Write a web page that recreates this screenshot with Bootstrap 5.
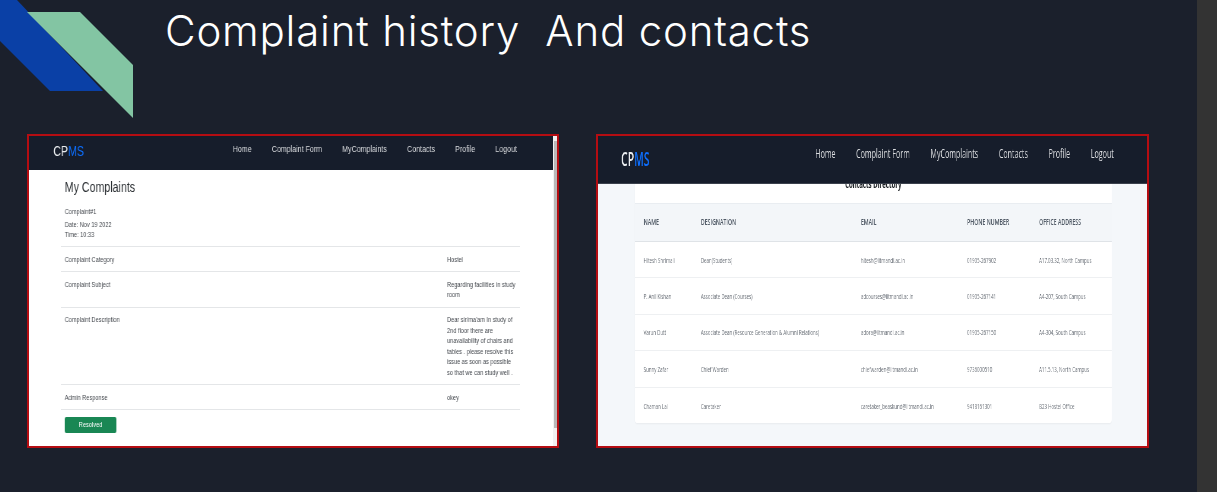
<!DOCTYPE html>
<html lang="en">
<head>
  <meta charset="UTF-8">
  <meta name="viewport" content="width=device-width, initial-scale=1">
  <title>Complaint history And contacts</title>
  <link href="https://cdn.jsdelivr.net/npm/bootstrap@5.3.0/dist/css/bootstrap.min.css" rel="stylesheet">
  <style>
    html, body { height: 492px; overflow: hidden; }
    body { background: #1b202c; }
    .slide { width: 1197px; height: 492px; flex: none; }
    .side-strip { width: 20px; height: 492px; background: #333; }
    .deco { width: 133px; height: 118px; flex: none; }
    .slide-title { font-family: Inter, sans-serif; font-weight: 300; font-size: 42px; line-height: 1; color: #fff; margin: 10px 0 0 32px; white-space: pre; letter-spacing: .8px; }
    .shots { gap: 37px; margin: 16px 0 0 27px; }
    .shot { height: 314px; border: 2px solid #b50d12; overflow: hidden; background: #fff; flex: none; }
    .shot-left { width: 532px; font-family: "Liberation Sans", sans-serif; }
    .shot-right { width: 553px; background: #f4f7fa; font-family: "Open Sans", sans-serif; }
    /* the two pictures are squeezed screenshots: lay out at natural width, then squeeze */
    .squeeze-frame { width: 524px; height: 310px; flex: none; overflow: hidden; }
    .squeeze-left { width: 690px; height: 310px; transform: scaleX(.76); transform-origin: 0 0; will-change: transform; }
    .squeeze-right { width: 998px; height: 310px; transform: scaleX(.55); transform-origin: 0 0; will-change: transform; }
    .shot-nav { background: #161d2b; position: relative; z-index: 2; align-items: flex-start; flex-wrap: nowrap; }
    .shot-left .shot-nav { height: 34px; padding: 7px 48px 0 32px; }
    .shot-right .shot-nav { height: 48px; padding: 8px 60px 0 42px; border-bottom: 1px solid #3a404c; }
    .logo { color: #e9ecef; padding: 0; margin: 0; }
    .logo span { color: #0d6efd; }
    .shot-left .logo { font-size: 14px; line-height: 16px; }
    .shot-right .logo { font-size: 19px; line-height: 27px; margin-top: 2px; font-weight: 600; }
    .shot-nav .nav { flex-wrap: nowrap; white-space: nowrap; }
    .shot-nav .nav-link { color: #dcdee1; padding: 0; }
    .shot-left .nav { gap: 26.5px; line-height: 12px; }
    .shot-left .nav-link { font-size: 9.3px; }
    .shot-right .nav { gap: 37.5px; line-height: 18px; }
    .shot-right .nav-link { font-size: 13px; }
    .fake-scroll { width: 5px; flex: none; background: #f1f1f1; padding: 5px 1px; }
    .fake-scroll div { background: #b9b9b9; height: 287px; }
    .complaint-box { padding: 0 44px 0 42px; color: #44484e; font-size: 7.4px; line-height: 10.5px; }
    .complaint-box h1 { font-size: 14px; line-height: 16px; margin: 9px 0 11.5px 5px; font-weight: 400; color: #2b2f33; }
    .complaint-meta { padding-left: 5px; height: 39.5px; }
    .complaint-meta p { margin: 0; }
    .complaint-meta p:first-child { margin-bottom: 2.5px; }
    .complaint-table { margin: 0; font-size: 7.4px; table-layout: fixed; width: 604px; }
    .complaint-table td { padding: 7.5px 5px 6px; border-top: 1px solid #e4e6e8; border-bottom: 0; color: #44484e; vertical-align: top; line-height: 10.5px; }
    .complaint-table tr:last-child td { border-bottom: 1px solid #e4e6e8; }
    .complaint-table td:last-child { width: 101px; }
    .resolve-btn { width: 68px; height: 16px; padding: 0; margin: 7px 0 0 5px; font-size: 7.4px; line-height: 16px; border-radius: 2px; border: 0; display: block; }
    .contacts-card { width: 867px; margin: -14px 0 0 67px; background: #fff; border-radius: 4px; box-shadow: 0 1px 2px rgba(0,0,0,.05); overflow: hidden; }
    .contacts-title { height: 33px; padding-top: 8px; text-align: center; font-size: 11px; font-weight: 700; line-height: 11px; color: #212529; margin: 0; }
    .contacts-table { margin: 0; table-layout: fixed; width: 867px; font-size: 8px; }
    .contacts-table th { height: 38px; padding: 0 0 0 16px; background: #f3f6f9; border-top: 1px solid #e9edf1; border-bottom: 1px solid #dfe3e7; color: #505a66; font-weight: 600; font-size: 9.5px; vertical-align: middle; white-space: nowrap; }
    .contacts-table td { height: 36.4px; padding: 0 0 0 16px; border-bottom: 1px solid #eef0f2; color: #6a7078; vertical-align: middle; white-space: nowrap; }
    .contacts-table tr:last-child td { border-bottom: 0; }
    .col-name { width: 104px; }
    .col-role { width: 291px; }
    .col-mail { width: 193px; }
    .col-phone { width: 131px; }
  </style>
</head>
<body>
  <div class="d-flex">
    <div class="slide">
      <!-- Title row with the corner shapes -->
      <div class="d-flex align-items-start">
        <svg class="deco" viewBox="0 0 133 118" aria-hidden="true">
          <polygon points="0,0 17,0 103,91 50,91 0,41" fill="#0a40a6"/>
          <polygon points="27,12 80,12 133,65 133,118" fill="#83c5a3"/>
        </svg>
        <div class="slide-title">Complaint history  And contacts</div>
      </div>

      <div class="d-flex shots">
        <!-- My complaints window -->
        <div class="shot shot-left d-flex">
          <div class="squeeze-frame">
            <div class="squeeze-left">
              <nav class="navbar shot-nav justify-content-between">
                <a class="navbar-brand logo" href="#">CP<span>MS</span></a>
                <ul class="nav">
                  <li class="nav-item"><a class="nav-link" href="#">Home</a></li>
                  <li class="nav-item"><a class="nav-link" href="#">Complaint Form</a></li>
                  <li class="nav-item"><a class="nav-link" href="#">MyComplaints</a></li>
                  <li class="nav-item"><a class="nav-link" href="#">Contacts</a></li>
                  <li class="nav-item"><a class="nav-link" href="#">Profile</a></li>
                  <li class="nav-item"><a class="nav-link" href="#">Logout</a></li>
                </ul>
              </nav>
              <div class="complaint-box">
                <h1>My Complaints</h1>
                <div class="complaint-meta">
                  <p>Complaint#1</p>
                  <p>Date: Nov 19 2022</p>
                  <p>Time: 10:33</p>
                </div>
                <table class="table complaint-table">
                  <tbody>
                    <tr><td>Complaint Category</td><td>Hostel</td></tr>
                    <tr><td>Complaint Subject</td><td>Regarding facilities in study room</td></tr>
                    <tr><td>Complaint Description</td><td>Dear sir/ma'am In study of 2nd floor there are unavailability of chairs and tables . please resolve this issue as soon as possible so that we can study well .</td></tr>
                    <tr><td>Admin Response</td><td>okey</td></tr>
                  </tbody>
                </table>
                <button class="btn btn-success resolve-btn" type="button">Resolved</button>
              </div>
            </div>
          </div>
          <div class="fake-scroll"><div></div></div>
        </div>

        <!-- Contacts window -->
        <div class="shot shot-right">
          <div class="squeeze-right">
            <nav class="navbar shot-nav justify-content-between">
              <a class="navbar-brand logo" href="#">CP<span>MS</span></a>
              <ul class="nav">
                <li class="nav-item"><a class="nav-link" href="#">Home</a></li>
                <li class="nav-item"><a class="nav-link" href="#">Complaint Form</a></li>
                <li class="nav-item"><a class="nav-link" href="#">MyComplaints</a></li>
                <li class="nav-item"><a class="nav-link" href="#">Contacts</a></li>
                <li class="nav-item"><a class="nav-link" href="#">Profile</a></li>
                <li class="nav-item"><a class="nav-link" href="#">Logout</a></li>
              </ul>
            </nav>
            <div class="contacts-card">
              <p class="contacts-title">Contacts Directory</p>
              <table class="table contacts-table">
                <thead>
                  <tr>
                    <th class="col-name">NAME</th>
                    <th class="col-role">DESIGNATION</th>
                    <th class="col-mail">EMAIL</th>
                    <th class="col-phone">PHONE NUMBER</th>
                    <th>OFFICE ADDRESS</th>
                  </tr>
                </thead>
                <tbody id="contact-rows"></tbody>
              </table>
            </div>
          </div>
        </div>
      </div>
    </div>
    <div class="side-strip"></div>
  </div>

  <script src="https://cdn.jsdelivr.net/npm/bootstrap@5.3.0/dist/js/bootstrap.bundle.min.js"></script>
  <script>
    const contacts = [
      ["Hitesh Shrimali", "Dean(Students)", "hitesh@iitmandi.ac.in", "01905-267902", "A17.03.32, North Campus"],
      ["P. Anil Kishan", "Associate Dean (Courses)", "adcourses@iitmandi.ac.in", "01905-267141", "A4-207, South Campus"],
      ["Varun Dutt", "Associate Dean (Resource Generation & Alumni Relations)", "adora@iitmandi.ac.in", "01905-267150", "A4-304, South Campus"],
      ["Sunny Zafar", "Chief Warden", "chiefwarden@iitmandi.ac.in", "9736000510", "A11.5.13, North Campus"],
      ["Chaman Lal", "Caretaker", "caretaker_beaskund@iitmandi.ac.in", "9418161301", "B23 Hostel Office"]
    ];
    document.getElementById("contact-rows").innerHTML = contacts.map(row =>
      "<tr>" + row.map(cell => "<td>" + cell.replace("&", "&amp;") + "</td>").join("") + "</tr>"
    ).join("");
  </script>
</body>
</html>
